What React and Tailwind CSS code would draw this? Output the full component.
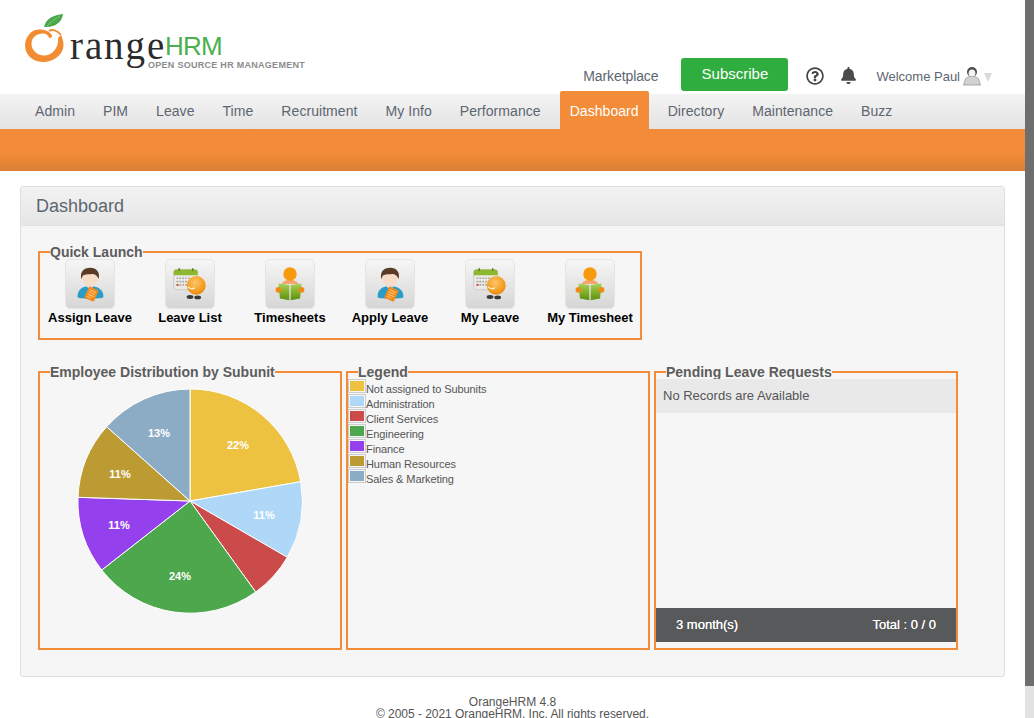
import { FaBell, FaRegQuestionCircle } from 'react-icons/fa'

const navItems = ['Admin', 'PIM', 'Leave', 'Time', 'Recruitment', 'My Info', 'Performance', 'Dashboard', 'Directory', 'Maintenance', 'Buzz']

const legendItems = [
  ['Not assigned to Subunits', 'bg-[#edc240]'],
  ['Administration', 'bg-[#afd8f8]'],
  ['Client Services', 'bg-[#cb4b4b]'],
  ['Engineering', 'bg-[#4da74d]'],
  ['Finance', 'bg-[#9440ed]'],
  ['Human Resources', 'bg-[#bd9b33]'],
  ['Sales & Marketing', 'bg-[#8cacc6]'],
]

const slices = [
  ['#edc240', 'M190 501 L190 389 A112 112 0 0 1 300.7 481.7 Z'],
  ['#afd8f8', 'M190 501 L300.7 481.7 A112 112 0 0 1 287.3 557.3 Z'],
  ['#cb4b4b', 'M190 501 L287.3 557.3 A112 112 0 0 1 255.7 592 Z'],
  ['#4da74d', 'M190 501 L255.7 592 A112 112 0 0 1 101.7 570 Z'],
  ['#9440ed', 'M190 501 L101.7 570 A112 112 0 0 1 78 497.3 Z'],
  ['#bd9b33', 'M190 501 L78 497.3 A112 112 0 0 1 106.7 426.7 Z'],
  ['#8cacc6', 'M190 501 L106.7 426.7 A112 112 0 0 1 190 389 Z'],
]

const pieLabels = [
  ['22%', 238, 449],
  ['11%', 264, 519],
  ['24%', 180, 580],
  ['11%', 119, 529],
  ['11%', 120, 478],
  ['13%', 159, 437],
]

function PersonIcon() {
  return (
    <svg viewBox="0 0 50 50" className="w-full h-full">
      <path d="M12 38 C12 31 17 27 25 27 C33 27 39 31 39 38 C39 40 35 40 25 40 C16 40 12 40 12 38 Z" fill="#2a9cc8" />
      <path d="M21 27 L25 31 L29 27 L28 24 H22 Z" fill="#e9e4dc" />
      <ellipse cx="25" cy="18" rx="8" ry="9" fill="#f6dcc6" />
      <path d="M16 20 C14 11 20 8 25.5 8 C31 8 36 12 34 20 C33 17 31 15 28 14.5 C24 15 20 14.5 18 16 C17 17 17 18 16 20 Z" fill="#5b3b26" />
      <g transform="rotate(25 26.5 35.5)">
        <rect x="21" y="29" width="11" height="13" rx="1" fill="#f08a1e" />
        <path d="M23 32 H30 M23 34.5 H30 M23 37 H30 M23 39.5 H28" stroke="#fcc872" strokeWidth="1" />
      </g>
    </svg>
  )
}

function CalendarIcon() {
  return (
    <svg viewBox="0 0 50 50" className="w-full h-full">
      <defs>
        <radialGradient id="ballGrad" cx="0.45" cy="0.35" r="0.7">
          <stop offset="0" stopColor="#fbc56b" />
          <stop offset="0.7" stopColor="#f59b1c" />
          <stop offset="1" stopColor="#e07f10" />
        </radialGradient>
      </defs>
      <rect x="8" y="10" width="25" height="21" rx="3" fill="#eceae6" stroke="#b5b5ad" strokeWidth="0.6" />
      <path d="M8 16 V13 A3 3 0 0 1 11 10 H30 A3 3 0 0 1 33 13 V16 Z" fill="#8db72f" />
      <rect x="13" y="8.5" width="1.5" height="3" fill="#5f7d1f" />
      <rect x="27" y="8.5" width="1.5" height="3" fill="#5f7d1f" />
      <path d="M11 19 H26 M11 22.5 H24 M11 26 H22" stroke="#a9a9a3" strokeWidth="1.8" strokeDasharray="1.8 1.2" />
      <rect x="11" y="25" width="2" height="2" fill="#cf4b35" />
      <ellipse cx="25" cy="38.5" rx="3.5" ry="2" fill="#3a3a34" />
      <ellipse cx="33" cy="39" rx="3.5" ry="2" fill="#3a3a34" />
      <circle cx="31.5" cy="26.5" r="9.8" fill="url(#ballGrad)" />
      <path d="M23 28 C25 30 28 30 30 29" stroke="#fff2d8" strokeWidth="1.3" fill="none" />
    </svg>
  )
}

function ReaderIcon() {
  return (
    <svg viewBox="0 0 50 50" className="w-full h-full">
      <defs>
        <linearGradient id="bookGrad" x1="0" y1="0" x2="0" y2="1">
          <stop offset="0" stopColor="#a8d05a" />
          <stop offset="0.55" stopColor="#7fae28" />
          <stop offset="1" stopColor="#5f8c12" />
        </linearGradient>
      </defs>
      <path d="M16 25 C18 21.5 21 20.5 25 20.5 C29 20.5 32 21.5 34 25 Z" fill="#f5a56a" />
      <circle cx="25" cy="14.5" r="7" fill="#f79a0e" />
      <path d="M13 24.5 L24.3 26 V42 L14.5 40 Z" fill="url(#bookGrad)" />
      <path d="M37 24.5 L25.7 26 V42 L35.5 40 Z" fill="url(#bookGrad)" />
      <circle cx="13" cy="31" r="3" fill="#f08a10" />
      <circle cx="37" cy="31" r="3" fill="#f08a10" />
    </svg>
  )
}

const launchItems = [
  ['Assign Leave', PersonIcon],
  ['Leave List', CalendarIcon],
  ['Timesheets', ReaderIcon],
  ['Apply Leave', PersonIcon],
  ['My Leave', CalendarIcon],
  ['My Timesheet', ReaderIcon],
]

function Logo() {
  return (
    <div className="flex flex-col">
      <div className="flex items-end h-[53px]">
        <svg viewBox="25 13 40 50" className="w-[40px] h-[50px] shrink-0">
          <path d="M44 27 C46 18 54 15 63 14 C62 22 55 28 44 27 Z" fill="#4aa84a" />
          <path d="M47 26 C51 22 55 19 60 16" stroke="#a6d8a0" strokeWidth="0.6" fill="none" />
          <path d="M51 34 C47 29 38 28.5 33 31 C27 35 24 42 25.5 49 C27.5 58 36 62.5 45 62 C55 61 63.5 54 63.5 45 C63.5 41 62.5 38 61 35 L58 38 C59 47 53 55.5 44 55.5 C37 55.5 31.5 50 31.5 44 C31.5 37 37 33.5 43 33.5 C46 33.5 48.5 35 49 38 C52 38 53 36 51 34 Z" fill="#f28c33" />
          <path d="M49 31 C52 29 57 30 61 35" stroke="#f28c33" strokeWidth="1.8" fill="none" />
        </svg>
        <span className="font-['Liberation_Serif',serif] text-[39px] leading-[39px] tracking-[1.9px] text-[#2b2b2b] ml-[5px] mb-[-2px]">range</span>
        <span className="text-[26px] leading-[26px] tracking-[-0.8px] text-[#4caf50] mb-[4px] ml-[-1px]">HRM</span>
      </div>
      <div className="ml-[123px] mt-[-3px] text-[9px] leading-[10px] font-bold tracking-[0.28px] text-[#8c8c8c] whitespace-nowrap">OPEN SOURCE HR MANAGEMENT</div>
    </div>
  )
}

function UserIcon() {
  return (
    <svg viewBox="0 0 18 20" className="w-[18px] h-[20px]">
      <path d="M0.5 19 L2.5 13 C3.5 11.5 5 11 7 10.5 L11 10.5 C13 11 14.5 11.5 15.5 13 L17.5 19 Z" fill="#d2d2d2" stroke="#9a9a9a" strokeWidth="0.8" />
      <circle cx="9" cy="6" r="5" fill="#4c4c4c" />
      <ellipse cx="9" cy="7.2" rx="3.4" ry="3.6" fill="#f3f3f3" />
    </svg>
  )
}

function Box({ title, className, children }) {
  return (
    <fieldset className={`border-2 border-[#f28c38] ${className}`}>
      <legend className="ml-[10px] text-[14px] leading-[16px] font-bold text-[#5d5d5d] whitespace-nowrap">{title}</legend>
      {children}
    </fieldset>
  )
}

export default function App() {
  return (
    <div className="flex h-screen overflow-hidden bg-white font-['Liberation_Sans',sans-serif]">
      <div className="w-[1025px] shrink-0">
        {/* Top bar */}
        <header className="h-[94px] flex justify-between pl-[25px]">
          <div className="pt-[10px]">
            <Logo />
          </div>
          <div className="flex items-start pt-[58px] pr-[33px] text-[#5d6670]">
            <span className="text-[14px] leading-[36px] tracking-[-0.1px] mr-[23px]">Marketplace</span>
            <button className="w-[107px] h-[33px] rounded-[3px] bg-[#2fad3f] text-white text-[15px] mr-[18px]">Subscribe</button>
            <FaRegQuestionCircle className="w-[18px] h-[18px] mt-[9px] text-[#444] mr-[16px]" />
            <FaBell className="w-[17px] h-[17px] mt-[9px] text-[#4b4b4b] mr-[19px]" />
            <span className="text-[13px] leading-[37px] mr-[3px]">Welcome Paul</span>
            <div className="mt-[8px] mr-[3px]"><UserIcon /></div>
            <span className="w-0 h-0 mt-[15px] border-x-[4px] border-t-[9px] border-x-transparent border-t-[#d9d9d9]" />
          </div>
        </header>

        {/* Main menu */}
        <nav className="h-[35px] flex items-end pl-[21px] bg-gradient-to-b from-[#f4f4f4] to-[#e3e3e3] tracking-[0.06px]">
          {navItems.map((item) =>
            item === 'Dashboard' ? (
              <a key={item} className="h-[38px] px-[10px] pt-[2px] mx-[5px] flex items-center rounded-t-[2px] bg-[#f28c38] text-white text-[14px]">{item}</a>
            ) : (
              <a key={item} className="h-[35px] px-[14px] flex items-center text-[#5d6670] text-[14px]">{item}</a>
            )
          )}
        </nav>
        <div className="h-[42px] bg-gradient-to-b from-[#f28c38] from-[60%] to-[#d97e33]" />

        {/* Dashboard panel */}
        <div className="mx-[20px] mt-[15px] h-[491px] border border-[#dedede] rounded-[3px] bg-[#f6f6f6]">
          <div className="h-[39px] px-[15px] flex items-center bg-gradient-to-b from-[#f2f2f2] to-[#e6e6e6] border-b border-[#e2e2e2] text-[18px] text-[#5d6670]">Dashboard</div>
          <div className="px-[17px] pt-[18px]">
            <Box title="Quick Launch" className="w-[604px] h-[96px]">
              <div className="flex -mt-px">
                {launchItems.map(([label, Icon]) => (
                  <div key={label} className="w-[100px] flex flex-col items-center">
                    <div className="w-[50px] h-[50px] border border-[#e6e6e0] rounded-[5px] bg-gradient-to-b from-[#f6f6f6] to-[#d6d6d6]">
                      <Icon />
                    </div>
                    <span className="text-[13px] leading-[15px] pt-[1px] font-bold text-black whitespace-nowrap">{label}</span>
                  </div>
                ))}
              </div>
            </Box>

            <div className="flex gap-[4px] mt-[24px]">
              <Box title="Employee Distribution by Subunit" className="w-[304px] h-[286px]">
                <svg viewBox="40 380 300 268" className="w-[300px] h-[268px]">
                  {slices.map(([color, d]) => (
                    <path key={color} d={d} fill={color} stroke="#fff" strokeWidth="1" />
                  ))}
                  {pieLabels.map(([text, x, y], i) => (
                    <text key={i} x={x} y={y} textAnchor="middle" fontSize="11" fontWeight="700" fill="#fff">{text}</text>
                  ))}
                </svg>
              </Box>

              <Box title="Legend" className="w-[304px] h-[286px]">
                <div className="-mt-px">
                  {legendItems.map(([label, color]) => (
                    <div key={label} className="h-[15px] flex items-start text-[11px] leading-[15px] tracking-[-0.08px] text-[#555]">
                      <span className="w-[18px] h-[14px] shrink-0 border border-[#ccc] p-px"><span className={`block w-full h-full ${color}`} /></span>
                      <span className="mt-[3px]">{label}</span>
                    </div>
                  ))}
                </div>
              </Box>

              <Box title="Pending Leave Requests" className="w-[304px] h-[286px]">
                <div className="h-[268px] -mt-px flex flex-col">
                  <div className="h-[34px] px-[7px] flex items-center bg-[#e9e9e9] text-[13px] text-[#555]">No Records are Available</div>
                  <div className="mt-auto mb-[5px] h-[34px] px-[20px] flex items-center justify-between bg-[#58595b] text-white text-[13px] [text-shadow:0_0_0.6px_#fff]">
                    <span>3 month(s)</span>
                    <span>Total : 0 / 0</span>
                  </div>
                </div>
              </Box>
            </div>
          </div>
        </div>

        <footer className="pt-[19px] text-center text-[12px] leading-[12px] text-[#555]">
          <div>OrangeHRM 4.8</div>
          <div className="tracking-[-0.04px]">© 2005 - 2021 OrangeHRM, Inc. All rights reserved.</div>
        </footer>
      </div>

      {/* Scrollbar */}
      <div className="w-[9px] flex flex-col bg-[#e2e2e2]">
        <div className="h-[686px] bg-[#6e6e6e]" />
      </div>
    </div>
  )
}
